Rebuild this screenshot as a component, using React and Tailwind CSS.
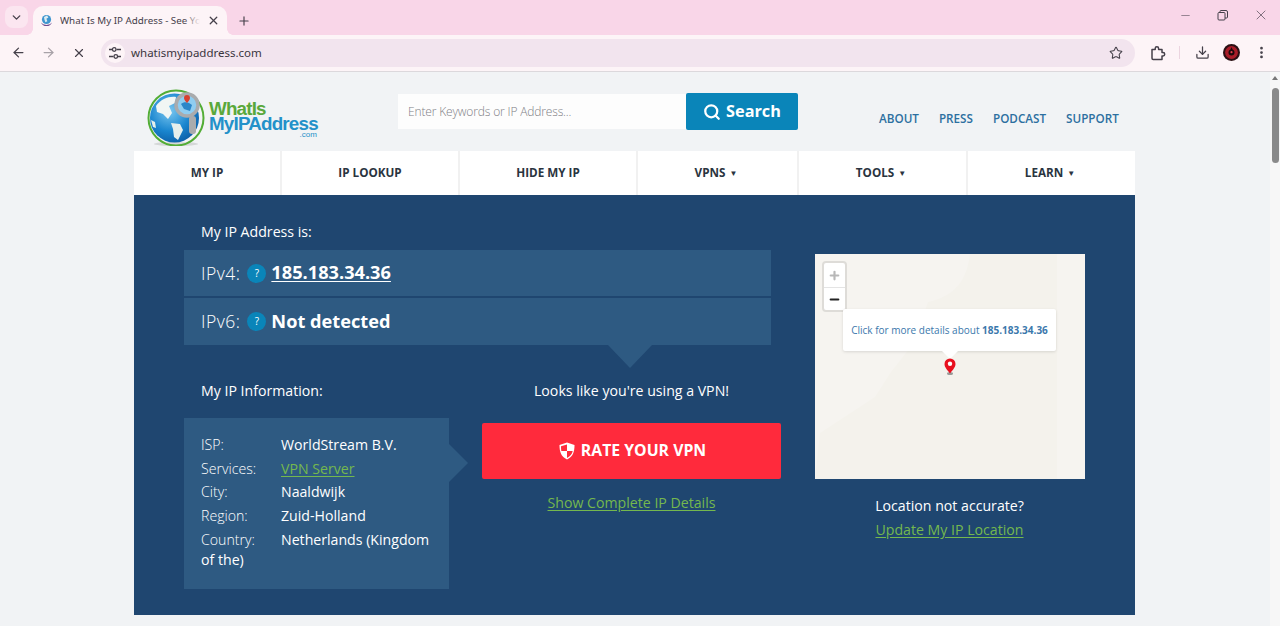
import React from 'react';
import { ArrowLeft, ArrowRight, ChevronDown, Download, EllipsisVertical, Minus, Plus, Search, Star, X } from 'lucide-react';

const navItems = [
    { label: 'MY IP', width: 'w-[148px]' },
    { label: 'IP LOOKUP', width: 'w-[178px]' },
    { label: 'HIDE MY IP', width: 'w-[178px]' },
    { label: 'VPNS', width: 'w-[161px]', caret: true },
    { label: 'TOOLS', width: 'w-[169px]', caret: true },
    { label: 'LEARN', width: 'w-[167px]', caret: true },
];

const infoRows = [
    { label: 'ISP:', value: 'WorldStream B.V.' },
    { label: 'Services:', value: 'VPN Server', link: true },
    { label: 'City:', value: 'Naaldwijk' },
    { label: 'Region:', value: 'Zuid-Holland' },
];

const TuneIcon = () => (
    <svg width="14" height="14" viewBox="0 0 14 14" fill="none" stroke="#45404a" strokeWidth="1.3">
        <path d="M1 3.5h3M8.5 3.5H13M1 10.5h4.5M10 10.5h3" />
        <circle cx="6.2" cy="3.5" r="1.8" />
        <circle cx="7.8" cy="10.5" r="1.8" />
    </svg>
);

const ExtensionIcon = () => (
    <svg width="16" height="16" viewBox="0 0 16 16" fill="none" stroke="#45404a" strokeWidth="1.5" strokeLinejoin="round" className="ml-[15px]">
        <path d="M2 4.500h3.200V3.400a1.700 1.700 0 0 1 3.400 0v1.100h3.400v3h1a1.700 1.700 0 0 1 0 3.400h-1v3.600H3.200a1.200 1.200 0 0 1-1.200-1.200z" />
    </svg>
);

const Avatar = () => (
    <svg width="17" height="17" viewBox="0 0 17 17">
        <circle cx="8.5" cy="8.5" r="8.5" fill="#2a1014" />
        <circle cx="8.5" cy="8.5" r="6.4" fill="#a81c28" />
        <circle cx="8.5" cy="8.5" r="3" fill="#1c0a0d" />
        <path d="M8.5 3l2.6 6.6H5.900z" fill="#1c0a0d" />
        <circle cx="8.500" cy="8.200" r="1.100" fill="#e0404c" />
    </svg>
);

const BrowserChrome = () => (
    <div className="font-['Noto_Sans',sans-serif] text-[#45404a]">
        {/* Tab strip */}
        <div className="h-[35px] bg-[#f9d6e8] flex items-start pt-[6px] pl-[5px]">
            <div className="w-[23px] h-[22px] rounded-lg bg-[#fbe6f0] flex items-center justify-center">
                <ChevronDown size={13} strokeWidth={2.5} />
            </div>
            <div className="ml-[5px] w-[194px] h-[29px] bg-[#fdf4f7] rounded-t-[10px] flex items-center pl-[7px] pr-[7px] relative">
                <div className="absolute -left-[6px] bottom-0 w-[6px] h-[6px] bg-[radial-gradient(circle_at_0_0,transparent_5.500px,#fdf4f7_6px)]" />
                <div className="absolute -right-[6px] bottom-0 w-[6px] h-[6px] bg-[radial-gradient(circle_at_100%_0,transparent_5.500px,#fdf4f7_6px)]" />
                <svg width="13" height="13" viewBox="0 0 13 13" className="shrink-0">
                    <circle cx="6.5" cy="5.5" r="4.6" fill="#3f96cf" />
                    <path d="M4 3l3-1.400 1.400 2-2 1.200 1 2.400-2 1-1-2.600z" fill="#dcecf2" />
                    <path d="M1 8.500a6 4 0 0 0 11 0 6 6 0 0 1-11 0z" fill="#6d4a8f" />
                </svg>
                <div className="ml-[7px] w-[140px] overflow-hidden whitespace-nowrap text-[9.800px] leading-[14px] relative">
                    What Is My IP Address - See Yo
                    <div className="absolute right-0 top-0 bottom-0 w-[16px] bg-gradient-to-r from-transparent to-[#fdf4f7]" />
                </div>
                <X size={13} strokeWidth={2.4} className="ml-[7px] shrink-0" />
            </div>
            <Plus size={14} strokeWidth={2} className="ml-[10px] mt-[8px]" />
            <div className="flex-1" />
            <div className="flex items-center h-[18px] pr-[11px] gap-[25px]">
                <Minus size={13} strokeWidth={1} />
                <svg width="11" height="11" viewBox="0 0 11 11" fill="none" stroke="#45404a" strokeWidth="1">
                    <rect x="1" y="2.500" width="7" height="7.500" rx="1" />
                    <path d="M3 2.500V1.500a1 1 0 0 1 1-1h5a1.500 1.500 0 0 1 1.500 1.500v5a1 1 0 0 1-1 1H8" />
                </svg>
                <X size={16} strokeWidth={1} />
            </div>
        </div>

        {/* Toolbar */}
        <div className="h-[37px] bg-[#fdf4f7] border-b border-[#dcd8dc] flex items-center pl-[11px] pb-[1px]">
            <ArrowLeft size={15} strokeWidth={2} />
            <ArrowRight size={15} strokeWidth={2} className="ml-[15px] text-[#a8a2a8]" />
            <X size={14} strokeWidth={2} className="ml-[16px]" />
            <div className="ml-[15px] w-[1034px] h-[28px] rounded-full bg-[#f2e4ee] flex items-center pl-[4px] pr-[12px]">
                <div className="w-[20px] h-[20px] rounded-full bg-[#fdf4f7] flex items-center justify-center">
                    <TuneIcon />
                </div>
                <span className="ml-[6px] text-[11.500px] text-[#3a353d]">whatismyipaddress.com</span>
                <div className="flex-1" />
                <Star size={14} strokeWidth={1.8} />
            </div>
            <ExtensionIcon />
            <div className="ml-[13px] w-px h-[13px] bg-[#ecd5e0]" />
            <Download size={15} strokeWidth={2} className="ml-[15px]" />
            <div className="ml-[13px]"><Avatar /></div>
            <EllipsisVertical size={15} strokeWidth={2.4} className="ml-[14px]" />
        </div>
    </div>
);

const Logo = () => (
    <div className="flex items-start w-[200px] ml-[13px] mt-[8px]">
        <svg width="62" height="66" viewBox="0 0 62 66" className="shrink-0">
            <defs>
                <radialGradient id="sea" cx="40%" cy="35%" r="70%">
                    <stop offset="0%" stopColor="#7cc8f0" />
                    <stop offset="60%" stopColor="#1a86cf" />
                    <stop offset="100%" stopColor="#0c5ea6" />
                </radialGradient>
            </defs>
            <ellipse cx="29" cy="64" rx="22" ry="2" fill="#d5d7d8" />
            <circle cx="29" cy="38" r="27.500" fill="none" stroke="#53ad36" strokeWidth="2" />
            <circle cx="27.500" cy="38" r="24.500" fill="url(#sea)" />
            <path d="M9 26c5-7 13-10 20-9l-1 6-6 3 3 7-4 6-5-5-6-2z" fill="#f1f6f4" />
            <path d="M24 43l9 1 3 6-5 10-4-3-1-8z" fill="#e6efec" />
            <path d="M4 40l4 2 1 6-3-1z" fill="#e6efec" />
            <circle cx="40" cy="25" r="11" fill="#8fcdf0" stroke="#a9abad" strokeWidth="3.500" />
            <path d="M34 24c3-3 8-2 11 1l-2 6-6-2z" fill="#2b86c9" />
            <path d="M40 23c-1.500-2-3-3-3-5a3 3 0 0 1 6 0c0 2-1.500 3-3 5z" fill="#d8402f" />
            <rect x="42" y="36" width="7" height="18" rx="3" fill="#a9abad" />
        </svg>
        <div className="mt-[21px] font-['Liberation_Sans',sans-serif] font-bold tracking-[-0.8px] text-[18.800px] leading-[15px]">
            <div className="text-[#5aa83b]">WhatIs</div>
            <div className="text-[#2391c9]">MyIPAddress</div>
            <div className="text-[#2391c9] text-[8px] leading-[8px] font-normal tracking-normal text-right pr-[1px]">.com</div>
        </div>
    </div>
);

const Header = () => (
    <div className="h-[79px] flex items-start">
        <Logo />
        <div className="ml-[51px] mt-[21px] flex">
            <div className="w-[288px] h-[35px] mt-[1px] bg-[#fdfdfd] pl-[10px] flex items-center text-[12px] tracking-[-0.15px] font-light text-[#808085]">
                Enter Keywords or IP Address...
            </div>
            <div className="w-[112px] h-[37px] bg-[#0a85b9] rounded-[2px] flex items-center justify-center gap-[5px] text-white font-bold text-[16.300px]">
                <Search size={18} strokeWidth={3} />
                Search
            </div>
        </div>
        <div className="ml-[81px] mt-[38px] flex gap-[20px] text-[11.700px] font-semibold text-[#2c6fa0]">
            <span>ABOUT</span>
            <span>PRESS</span>
            <span>PODCAST</span>
            <span>SUPPORT</span>
        </div>
    </div>
);

const Nav = () => (
    <div className="h-[44px] bg-white flex text-[11.700px] font-bold text-[#2a3440]">
        {navItems.map((item, idx) => (
            <div
                key={item.label}
                className={`${item.width} flex items-center justify-center gap-[4px] ${item.caret ? 'pr-[3px]' : ''} ${idx < navItems.length - 1 ? 'border-r-2 border-[#f1f1f1]' : ''}`}
            >
                {item.label}
                {item.caret && <span className="text-[8px]">▼</span>}
            </div>
        ))}
    </div>
);

const IpRow = ({ label, children, className }) => (
    <div className={`bg-[#2e5a82] flex items-center pl-[17px] ${className}`}>
        <span className="text-[17.500px] tracking-[0.5px] font-light text-white">{label}</span>
        <span className="ml-[7px] w-[19px] h-[19px] rounded-full bg-[#0a85b9] flex items-center justify-center text-[10px] text-white">?</span>
        <span className="ml-[5px] text-[18.200px] font-bold text-white">{children}</span>
    </div>
);

const ShieldIcon = () => (
    <svg width="16" height="18" viewBox="0 0 16 18">
        <path d="M8 .5L15.500 3c0 7-1.500 11.500-7.500 14.500C2 14.500.5 10 .5 3z" fill="#fff" />
        <path d="M8 2.500V9H2.300c-.2-1.500-.3-3.200-.3-4.800zM8 9h5.700c-.7 3.100-2.300 5.100-5.700 6.900z" fill="#ff2a3c" />
    </svg>
);

const MapPanel = () => (
    <div className="w-[270px] h-[225px] relative overflow-hidden bg-[#f6f4f0]">
        <svg width="270" height="225" viewBox="0 0 270 225" className="absolute inset-0">
            <path d="M155 0c-3 25-14 42-42 48l-15 42-22 28-16 25-55 36-5 46h242V0z" fill="#f4f2ec" />
            <rect x="242" width="28" height="225" fill="#f6f4f0" />
        </svg>

        {/* Zoom controls */}
        <div className="absolute left-[7px] top-[7px] w-[25px] h-[51px] rounded-[4px] bg-white border-2 border-[#dedcd8] flex flex-col">
            <div className="h-[25px] border-b border-[#e4e4e4] flex items-center justify-center text-[#b8b8b8]">
                <Plus size={13} strokeWidth={4} />
            </div>
            <div className="flex-1 flex items-center justify-center text-[#222]">
                <Minus size={13} strokeWidth={4} />
            </div>
        </div>

        {/* Tooltip */}
        <div className="absolute left-[28px] top-[55px] w-[213px] h-[42px] rounded-[2px] bg-white shadow-[0_1px_3px_rgba(0,0,0,0.12)] flex items-center justify-center text-[10px] whitespace-nowrap text-[#3b78ac]">
            <span>Click for more details about <b>185.183.34.36</b></span>
        </div>
        <div className="absolute left-[127px] top-[97px] border-x-[8px] border-x-transparent border-t-[8px] border-t-white" />

        {/* Pin */}
        <svg width="12" height="17" viewBox="0 0 12 17" className="absolute left-[129px] top-[104px]">
            <ellipse cx="6" cy="15.500" rx="3" ry="1.500" fill="#9a9a98" />
            <path d="M6 15.500C3.500 12 .5 9.500.5 6a5.500 5.500 0 0 1 11 0c0 3.500-3 6-5.500 9.500z" fill="#e8101e" />
            <circle cx="6" cy="5.800" r="2.200" fill="#fff" />
        </svg>
    </div>
);

const IpPanel = () => (
    <div className="h-[420px] bg-[#1f4670] flex pl-[50px] text-[14.150px] text-white">
        <div className="w-[597px]">
            <div className="h-[55px] pl-[17px] pt-[27px] leading-[20px]">My IP Address is:</div>
            <div className="w-[587px] relative">
                <IpRow label="IPv4:" className="h-[46px] mb-[2px]">
                    <span className="underline underline-offset-2">185.183.34.36</span>
                </IpRow>
                <IpRow label="IPv6:" className="h-[47px]">Not detected</IpRow>
                <div className="absolute left-[424px] top-full border-x-[22px] border-x-transparent border-t-[23px] border-t-[#2e5a82]" />
            </div>

            <div className="flex mt-[36px]">
                <div className="w-[265px]">
                    <div className="pl-[17px] leading-[20px] mb-[17px]">My IP Information:</div>
                    <div className="h-[171px] bg-[#2e5a82] relative px-[17px] pt-[15px] leading-[23.500px]">
                        {infoRows.map(row => (
                            <div key={row.label} className="flex">
                                <span className="w-[80px] font-light">{row.label}</span>
                                {row.link
                                    ? <span className="text-[#74b84e] underline underline-offset-2">{row.value}</span>
                                    : <span>{row.value}</span>}
                            </div>
                        ))}
                        <div className="leading-[20px] mt-[3px]">
                            <span className="inline-block w-[80px] font-light">Country:</span>
                            Netherlands (Kingdom of the)
                        </div>
                        <div className="absolute left-full top-[26px] border-y-[19px] border-y-transparent border-l-[19px] border-l-[#2e5a82]" />
                    </div>
                </div>
                <div className="ml-[33px] w-[299px] text-center">
                    <div className="leading-[20px]">Looks like you're using a VPN!</div>
                    <div className="mt-[22px] h-[56px] bg-[#ff2a3c] rounded-[2px] flex items-center justify-center gap-[6px] pb-[1px] pl-[2px] text-[15.800px] font-bold">
                        <ShieldIcon />
                        RATE YOUR VPN
                    </div>
                    <div className="mt-[13px] text-[#74b84e] underline underline-offset-2">Show Complete IP Details</div>
                </div>
            </div>
        </div>

        <div className="ml-[34px] w-[270px] pt-[59px] text-center">
            <MapPanel />
            <div className="mt-[17px] pr-[1px] leading-[20px]">Location not accurate?</div>
            <div className="mt-[4px] pr-[1px] leading-[20px] text-[#74b84e] underline underline-offset-2">Update My IP Location</div>
        </div>
    </div>
);

const App = () => (
    <div className="h-[626px] overflow-hidden bg-[#f1f3f5] font-['Open_Sans',sans-serif]">
        <BrowserChrome />
        <div className="flex h-[554px]">
            <div className="flex-1 min-w-0">
                <div className="ml-[134px] w-[1001px]">
                    <Header />
                    <Nav />
                    <IpPanel />
                </div>
            </div>
            {/* Scrollbar */}
            <div className="w-[10px] bg-[#f7f7f7] flex flex-col items-center">
                <div className="mt-[4px] border-x-[3px] border-x-transparent border-b-[4px] border-b-[#777]" />
                <div className="mt-[8px] w-[7px] h-[75px] rounded-full bg-[#8a8a8a]" />
            </div>
        </div>
    </div>
);

export default App;
